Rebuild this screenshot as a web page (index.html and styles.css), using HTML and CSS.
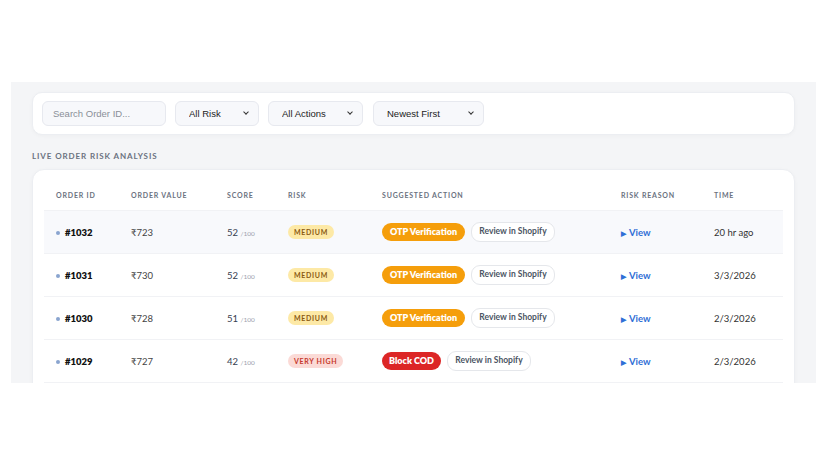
FILE: index.html
```html
<!DOCTYPE html>
<html lang="en">
<head>
<meta charset="UTF-8">
<meta name="viewport" content="width=device-width, initial-scale=1.0">
<title>Order Risk Dashboard</title>
<link rel="stylesheet" href="styles.css">
</head>
<body>
<div class="page">
  <div class="panel">
    <div class="filters">
      <input type="text" class="search" placeholder="Search Order ID...">
      <span class="sel-wrap sel-risk"><select class="sel"><option>All Risk</option></select></span>
      <span class="sel-wrap sel-actions"><select class="sel"><option>All Actions</option></select></span>
      <span class="sel-wrap sel-sort"><select class="sel"><option>Newest First</option></select></span>
    </div>

    <h2 class="section-title">Live Order Risk Analysis</h2>

    <div class="table-card">
      <table class="orders">
        <colgroup>
          <col style="width: 75px">
          <col style="width: 96px">
          <col style="width: 61px">
          <col style="width: 94px">
          <col style="width: 239px">
          <col style="width: 93px">
          <col style="width: 81px">
        </colgroup>
        <thead>
          <tr>
            <th>Order ID</th>
            <th>Order Value</th>
            <th>Score</th>
            <th>Risk</th>
            <th>Suggested Action</th>
            <th>Risk Reason</th>
            <th>Time</th>
          </tr>
        </thead>
        <tbody>
          <tr class="hl">
            <td><span class="dot"></span><span class="oid">#1032</span></td>
            <td class="val">₹723</td>
            <td><span class="score">52</span> <span class="max">/100</span></td>
            <td><span class="badge medium">Medium</span></td>
            <td><span class="btn otp">OTP Verification</span><span class="btn review">Review in Shopify</span></td>
            <td><span class="view"><span class="tri">▶</span> View</span></td>
            <td class="time">20 hr ago</td>
          </tr>
          <tr>
            <td><span class="dot"></span><span class="oid">#1031</span></td>
            <td class="val">₹730</td>
            <td><span class="score">52</span> <span class="max">/100</span></td>
            <td><span class="badge medium">Medium</span></td>
            <td><span class="btn otp">OTP Verification</span><span class="btn review">Review in Shopify</span></td>
            <td><span class="view"><span class="tri">▶</span> View</span></td>
            <td class="time">3/3/2026</td>
          </tr>
          <tr>
            <td><span class="dot"></span><span class="oid">#1030</span></td>
            <td class="val">₹728</td>
            <td><span class="score">51</span> <span class="max">/100</span></td>
            <td><span class="badge medium">Medium</span></td>
            <td><span class="btn otp">OTP Verification</span><span class="btn review">Review in Shopify</span></td>
            <td><span class="view"><span class="tri">▶</span> View</span></td>
            <td class="time">2/3/2026</td>
          </tr>
          <tr>
            <td><span class="dot"></span><span class="oid">#1029</span></td>
            <td class="val">₹727</td>
            <td><span class="score">42</span> <span class="max">/100</span></td>
            <td><span class="badge high">Very High</span></td>
            <td><span class="btn block">Block COD</span><span class="btn review">Review in Shopify</span></td>
            <td><span class="view"><span class="tri">▶</span> View</span></td>
            <td class="time">2/3/2026</td>
          </tr>
        </tbody>
      </table>
    </div>
  </div>
</div>
</body>
</html>
```

FILE: styles.css
```css
html, body, div, h2, table, input, select {
  margin: 0;
  padding: 0;
  box-sizing: border-box;
}

body {
  background-color: #fff;
  font-family: Lato, "Open Sans", sans-serif;
  color: #333;
}

.page {
  padding: 82px 12px 0 11px;
}

.panel {
  background-color: #f4f5f7;
  height: 301px;
  overflow: hidden;
  padding: 10px 21px 0 21px;
}

.filters {
  display: flex;
  align-items: center;
  background-color: #fff;
  border: 1px solid #eceef2;
  border-radius: 10px;
  padding: 8px 9px;
  height: 43px;
  box-shadow: 0 1px 4px rgba(0, 0, 0, 0.03);
}

.search, .sel {
  height: 25px;
  background-color: #f7f8fb;
  border: 1px solid #e7e9ef;
  border-radius: 6px;
  font-family: "Liberation Sans", Arial, sans-serif;
  font-size: 9.5px;
  color: #222;
  padding: 0 13px;
  outline: none;
}

.search {
  width: 124px;
  padding: 0 10px;
}

.search::placeholder {
  color: #8a8f98;
}

.sel-wrap {
  position: relative;
  display: block;
}

.sel {
  width: 100%;
  appearance: none;
  -webkit-appearance: none;
}

.sel-wrap::after {
  content: "";
  position: absolute;
  right: 11px;
  top: 9px;
  width: 3px;
  height: 3px;
  border-right: 1.5px solid #333;
  border-bottom: 1.5px solid #333;
  transform: rotate(45deg);
  pointer-events: none;
}

.sel-risk { width: 84px; margin-left: 9px; }
.sel-actions { width: 95px; margin-left: 9px; }
.sel-sort { width: 111px; margin-left: 10px; }

.section-title {
  font-size: 8px;
  font-weight: 700;
  letter-spacing: 0.9px;
  text-transform: uppercase;
  color: #6b7280;
  margin: 16px 0 8px 0;
}

.table-card {
  background-color: #fff;
  border: 1px solid #eceef2;
  border-radius: 12px;
  padding: 0 11px;
  min-height: 260px;
  box-shadow: 0 1px 4px rgba(0, 0, 0, 0.03);
}

.orders {
  width: 739px;
  border-collapse: collapse;
  table-layout: fixed;
}

.orders th {
  text-align: left;
  font-size: 7px;
  font-weight: 700;
  letter-spacing: 0.8px;
  text-transform: uppercase;
  color: #6b7280;
  padding: 21px 12px 11px 12px;
  border-bottom: 1px solid #f1f2f5;
  white-space: nowrap;
}

.orders td {
  height: 42px;
  padding: 0 12px;
  border-bottom: 1px solid #f1f2f5;
  font-size: 9.5px;
  white-space: nowrap;
  vertical-align: middle;
}

.orders tr.hl td {
  background-color: #f8f9fc;
}

.dot {
  display: inline-block;
  width: 4px;
  height: 4px;
  border-radius: 50%;
  background-color: #8aa4cf;
  margin-right: 5px;
  vertical-align: middle;
}

.oid {
  font-weight: 800;
  color: #111;
  font-size: 9.5px;
}

.val {
  color: #444;
}

.score {
  color: #374151;
}

.max {
  font-size: 6.5px;
  color: #9aa1ad;
}

.badge {
  display: inline-block;
  font-size: 7px;
  font-weight: 700;
  letter-spacing: 0.7px;
  text-transform: uppercase;
  padding: 3px 6px;
  border-radius: 8px;
}

.badge.medium {
  background-color: #fde9a6;
  color: #8a5a12;
}

.badge.high {
  background-color: #fbdad6;
  color: #c6372b;
}

.btn {
  display: inline-block;
  height: 18px;
  line-height: 18px;
  border-radius: 9px;
  font-size: 9px;
  font-weight: 800;
  text-align: center;
  vertical-align: middle;
}

.btn.otp {
  background-color: #f59e0b;
  color: #fff;
  width: 83px;
}

.btn.block {
  background-color: #dc2626;
  color: #fff;
  width: 59px;
}

.btn.review {
  background-color: #fff;
  border: 1px solid #e5e7eb;
  color: #4b5563;
  font-size: 8.5px;
  font-weight: 700;
  margin-left: 6px;
  width: 82px;
  line-height: 16px;
}

.view {
  color: #2f6fd6;
  font-weight: 700;
  font-size: 9.5px;
}

.tri {
  font-size: 7px;
  margin-right: 1px;
}

.time {
  color: #333;
}
```
